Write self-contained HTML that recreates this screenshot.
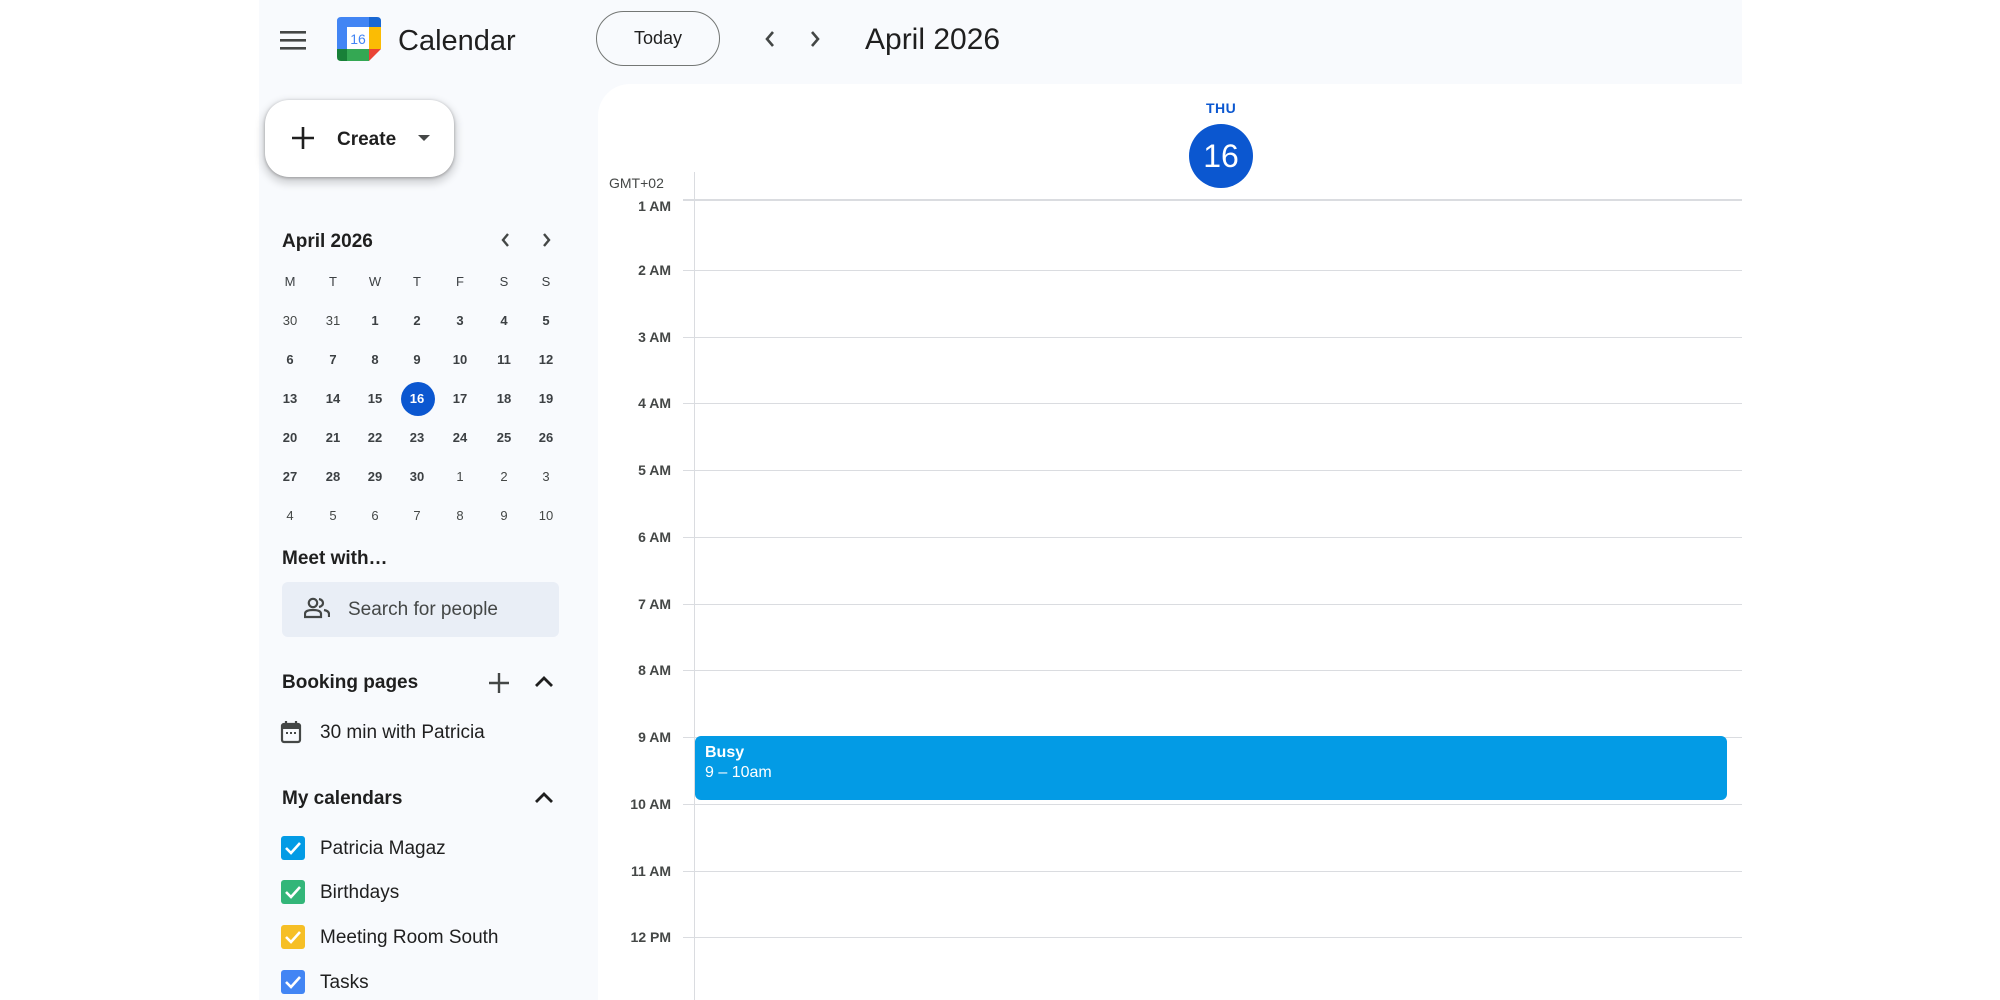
<!DOCTYPE html>
<html><head><meta charset="utf-8">
<style>
*{box-sizing:border-box;margin:0;padding:0}
body{width:2000px;height:1000px;background:#fff;font-family:"Liberation Sans",sans-serif;color:#1f1f1f;position:relative;overflow:hidden}
.abs{position:absolute}
#app{left:259px;top:0;width:1483px;height:1000px;background:#f8fafd}
#main{left:598px;top:84px;width:1144px;height:916px;background:#fff;border-top-left-radius:32px}
.t{position:absolute;white-space:nowrap}
.mc{position:absolute;width:30px;text-align:center;font-size:13px;font-weight:bold;color:#3c4043}
.hr{position:absolute;left:683px;width:1059px;height:1px;background:#dadce0}
.hl{position:absolute;right:1329px;font-size:14px;color:#444746;font-weight:bold;transform:translateY(-8px)}
.cb{position:absolute;left:281px;width:24px;height:24px;border-radius:3px}
.lab{position:absolute;left:320px;font-size:19px;color:#1f1f1f}
</style></head><body>
<div id="app" class="abs"></div>
<div id="main" class="abs"></div>

<svg class="abs" style="left:280px;top:28px" width="26" height="24" viewBox="0 0 26 24"><rect x="0" y="3" width="26" height="2.6" fill="#444746"/><rect x="0" y="11" width="26" height="2.6" fill="#444746"/><rect x="0" y="19" width="26" height="2.6" fill="#444746"/></svg>
<svg class="abs" style="left:337px;top:17px" width="44" height="44" viewBox="0 0 44 44">
<path d="M4 0H32V10H10V32H0V4Q0 0 4 0Z" fill="#4285f4"/>
<path d="M32 0H40Q44 0 44 4V10H32Z" fill="#1967d2"/>
<rect x="32" y="10" width="12" height="22" fill="#fbbc04"/>
<path d="M0 32H10V44H4Q0 44 0 40Z" fill="#188038"/>
<rect x="10" y="32" width="22" height="12" fill="#34a853"/>
<path d="M32 32H44L32 44Z" fill="#ea4335"/>
<rect x="10" y="10" width="22" height="22" fill="#fff"/>
<text x="21" y="27" font-family="Liberation Sans" font-size="14" fill="#4285f4" text-anchor="middle">16</text>
</svg>
<div class="t" style="left:398px;top:25px;font-size:29px;color:#1f1f1f">Calendar</div>
<div class="abs" style="left:596px;top:11px;width:124px;height:55px;border:1px solid #747775;border-radius:28px;text-align:center;line-height:53px;font-size:18px;color:#1f1f1f">Today</div>
<svg class="abs" style="left:762px;top:29px" width="16" height="20" viewBox="0 0 16 20"><path d="M11 3L5 10L11 17" stroke="#444746" stroke-width="2.6" fill="none"/></svg>
<svg class="abs" style="left:807px;top:29px" width="16" height="20" viewBox="0 0 16 20"><path d="M5 3L11 10L5 17" stroke="#444746" stroke-width="2.6" fill="none"/></svg>
<div class="t" style="left:865px;top:23px;font-size:30px;color:#1f1f1f">April 2026</div>

<div class="abs" style="left:265px;top:100px;width:189px;height:77px;background:#fff;border-radius:24px;box-shadow:0 1px 3px rgba(0,0,0,.3),0 4px 8px 3px rgba(0,0,0,.15)"></div>
<svg class="abs" style="left:291px;top:126px" width="24" height="24" viewBox="0 0 24 24"><path d="M12 1V23M1 12H23" stroke="#1f1f1f" stroke-width="2.6"/></svg>
<div class="t" style="left:337px;top:129px;font-size:19px;font-weight:bold;color:#1f1f1f">Create</div>
<svg class="abs" style="left:417px;top:134px" width="14" height="8" viewBox="0 0 14 8"><path d="M1 1H13L7 7Z" fill="#444746"/></svg>

<div class="t" style="left:282px;top:231px;font-size:19px;font-weight:bold;color:#1f1f1f">April 2026</div>
<svg class="abs" style="left:498px;top:231px" width="14" height="18" viewBox="0 0 14 18"><path d="M10 3L5 9L10 15" stroke="#444746" stroke-width="2.4" fill="none"/></svg>
<svg class="abs" style="left:540px;top:231px" width="14" height="18" viewBox="0 0 14 18"><path d="M4 3L9 9L4 15" stroke="#444746" stroke-width="2.4" fill="none"/></svg>
<div class="abs" style="left:401px;top:382px;width:34px;height:34px;border-radius:50%;background:#0b57d0"></div>
<div id="mini"></div>

<div class="t" style="left:282px;top:548px;font-size:19px;font-weight:bold;color:#1f1f1f">Meet with…</div>
<div class="abs" style="left:282px;top:582px;width:277px;height:55px;background:#e9eef6;border-radius:6px"></div>
<svg class="abs" style="left:304px;top:597px" width="26" height="22" viewBox="0 0 26 22"><circle cx="9" cy="6" r="4.2" stroke="#444746" stroke-width="2.2" fill="none"/><path d="M1 20V17Q1 13 9 13Q17 13 17 17V20Z" stroke="#444746" stroke-width="2.2" fill="none"/><path d="M15 2Q19 3 19 6Q19 9 15 10M20 13Q25 14 25 17V20" stroke="#444746" stroke-width="2.2" fill="none"/></svg>
<div class="t" style="left:348px;top:599px;font-size:19px;color:#444746">Search for people</div>

<div class="t" style="left:282px;top:672px;font-size:19px;font-weight:bold;color:#1f1f1f">Booking pages</div>
<svg class="abs" style="left:488px;top:672px" width="22" height="22" viewBox="0 0 22 22"><path d="M11 1V21M1 11H21" stroke="#444746" stroke-width="2.4"/></svg>
<svg class="abs" style="left:534px;top:675px" width="20" height="14" viewBox="0 0 20 14"><path d="M2 11L10 3L18 11" stroke="#1f1f1f" stroke-width="2.8" fill="none"/></svg>
<svg class="abs" style="left:280px;top:720px" width="22" height="24" viewBox="0 0 22 24"><rect x="2" y="4" width="18" height="18" rx="2" stroke="#444746" stroke-width="2.2" fill="none"/><rect x="2" y="4" width="18" height="5" fill="#444746"/><path d="M6 1V5M16 1V5" stroke="#444746" stroke-width="2.2"/><rect x="6" y="12" width="2" height="2" fill="#444746"/><rect x="10" y="12" width="2" height="2" fill="#444746"/><rect x="14" y="12" width="2" height="2" fill="#444746"/></svg>
<div class="t" style="left:320px;top:722px;font-size:19px;color:#1f1f1f">30 min with Patricia</div>

<div class="t" style="left:282px;top:788px;font-size:19px;font-weight:bold;color:#1f1f1f">My calendars</div>
<svg class="abs" style="left:534px;top:791px" width="20" height="14" viewBox="0 0 20 14"><path d="M2 11L10 3L18 11" stroke="#1f1f1f" stroke-width="2.8" fill="none"/></svg>

<div class="cb" style="top:836px;background:#039be5"></div>
<div class="lab" style="top:838px">Patricia Magaz</div>
<div class="cb" style="top:880px;background:#33b679"></div>
<div class="lab" style="top:882px">Birthdays</div>
<div class="cb" style="top:925px;background:#f6bf26"></div>
<div class="lab" style="top:927px">Meeting Room South</div>
<div class="cb" style="top:970px;background:#4285f4"></div>
<div class="lab" style="top:972px">Tasks</div>
<svg class="abs" style="left:281px;top:836px" width="24" height="160" viewBox="0 0 24 160">
<path d="M5 12L10 17L19 7" stroke="#fff" stroke-width="2.6" fill="none"/>
<path d="M5 56L10 61L19 51" stroke="#fff" stroke-width="2.6" fill="none"/>
<path d="M5 101L10 106L19 96" stroke="#fff" stroke-width="2.6" fill="none"/>
<path d="M5 146L10 151L19 141" stroke="#fff" stroke-width="2.6" fill="none"/>
</svg>

<div class="t" style="left:1206px;top:100px;font-size:14px;font-weight:bold;color:#0b57d0;letter-spacing:.5px">THU</div>
<div class="abs" style="left:1189px;top:124px;width:64px;height:64px;border-radius:50%;background:#0b57d0;color:#fff;font-size:32px;text-align:center;line-height:64px">16</div>
<div class="t" style="left:609px;top:175px;font-size:14px;color:#444746">GMT+02</div>
<div class="abs" style="left:694px;top:172px;width:1px;height:828px;background:#dadce0"></div>
<div class="abs" style="left:683px;top:199px;width:1059px;height:2px;background:#dadce0"></div>

<div id="grid"></div>

<div class="abs" style="left:695px;top:736px;width:1032px;height:64px;background:#039be5;border-radius:6px;color:#fff;padding:7px 10px;font-size:16px;line-height:20px"><b>Busy</b><br>9 – 10am</div>

<script>
var m=document.getElementById('mini'),h='';
var xs=[290,333,375,417,460,504,546];
var hd=['M','T','W','T','F','S','S'];
for(var i=0;i<7;i++)h+='<div class="mc" style="left:'+(xs[i]-15)+'px;top:274px;font-weight:normal;font-size:13px">'+hd[i]+'</div>';
var days=[30,31,1,2,3,4,5,6,7,8,9,10,11,12,13,14,15,16,17,18,19,20,21,22,23,24,25,26,27,28,29,30,1,2,3,4,5,6,7,8,9,10];
var ys=[313,352,391,430,469,508];
for(var r=0;r<6;r++)for(var c=0;c<7;c++){var k=r*7+c,d=days[k];var light=(k<2||k>=32);
h+='<div class="mc" style="left:'+(xs[c]-15)+'px;top:'+ys[r]+'px;'+(k==17?'color:#fff;':'')+(light?'font-weight:normal;color:#444746':'')+'">'+d+'</div>';}
m.innerHTML=h;
var g=document.getElementById('grid'),s='';
var L=['1 AM','2 AM','3 AM','4 AM','5 AM','6 AM','7 AM','8 AM','9 AM','10 AM','11 AM','12 PM'];
for(var i=0;i<12;i++){var y=Math.round(203+i*66.75);
if(i>0)s+='<div class="hr" style="top:'+y+'px"></div>';
s+='<div class="hl" style="top:'+(i==0?206:y)+'px">'+L[i]+'</div>';}
g.innerHTML=s;
</script>
</body></html>
